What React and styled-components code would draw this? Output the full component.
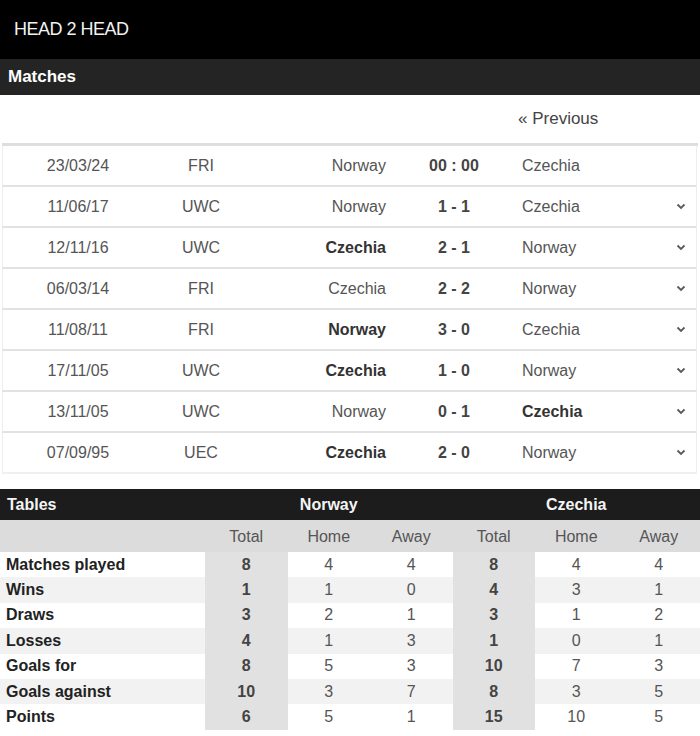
import React from "react";
import styled, { createGlobalStyle } from "styled-components";

const Global = createGlobalStyle`
  html, body { margin: 0; padding: 0; background: #fff; }
  body { font-family: "Liberation Sans", Arial, sans-serif; }
`;

const Page = styled.div`
  width: 700px;
  display: flex;
  flex-direction: column;
`;

const TopBar = styled.div`
  height: 59px;
  background: #000;
  color: #f2f2f2;
  display: flex;
  align-items: center;
  padding-left: 14px;
  font-size: 18px;
  letter-spacing: -0.5px;
`;

const SectionBar = styled.div`
  height: 36px;
  background: #242424;
  color: #fff;
  display: flex;
  align-items: center;
  padding-left: 8px;
  font-size: 17px;
  font-weight: bold;
`;

const PrevRow = styled.div`
  height: 48px;
  display: grid;
  grid-template-columns: 521px 1fr;
  align-items: center;
  border-bottom: 3px solid #dedede;
  margin: 0 2px;
`;

const PrevLink = styled.div`
  grid-column: 2;
  font-size: 17px;
  color: #444;
  transform: translateX(-5px);
`;

const MatchList = styled.div`
  display: flex;
  flex-direction: column;
  margin: 0 3px 0 2px;
`;

const MatchRow = styled.div`
  height: 39px;
  display: grid;
  grid-template-columns: 150px 96px 137px 136px 1fr 40px;
  align-items: center;
  border-left: 1px solid #eee;
  border-right: 1px solid #eee;
  border-bottom: 2px solid #e2e2e2;
  font-size: 16px;
  color: #555;
  &:last-child { border-bottom-color: #f0f0f0; }
`;

const Cell = styled.div`
  text-align: ${(p) => p.$align || "center"};
  font-weight: ${(p) => (p.$bold ? "bold" : "normal")};
  color: ${(p) => (p.$bold ? "#333" : "#555")};
`;

const Score = styled.div`
  text-align: center;
  font-weight: bold;
  color: #444;
  font-size: 16px;
`;

const Chevron = styled.div`
  display: flex;
  justify-content: center;
  align-items: center;
  padding-left: 10px;
`;

const Tables = styled.div`
  margin-top: 15px;
  display: grid;
  grid-template-columns: 205px repeat(6, 1fr);
`;

const THead = styled.div`
  height: 31px;
  background: #1c1c1c;
  color: #f4f4f4;
  display: flex;
  align-items: center;
  font-size: 16px;
  font-weight: bold;
  grid-column: ${(p) => p.$span || "auto"};
  justify-content: ${(p) => (p.$left ? "flex-start" : "center")};
  padding-left: ${(p) => (p.$left ? "7px" : "0")};
`;

const SubHead = styled.div`
  height: 32px;
  background: #dcdcdc;
  color: #555;
  display: flex;
  align-items: flex-end;
  justify-content: center;
  padding-bottom: 6px;
  box-sizing: border-box;
  font-size: 16px;
`;

const DataCell = styled.div`
  height: 25.4px;
  display: flex;
  align-items: center;
  justify-content: ${(p) => (p.$label ? "flex-start" : "center")};
  padding-left: ${(p) => (p.$label ? "6px" : "0")};
  background: ${(p) => (p.$total ? "#e1e1e1" : p.$alt ? "#f2f2f2" : "#fff")};
  font-size: 16px;
  font-weight: ${(p) => (p.$label || p.$total ? "bold" : "normal")};
  color: ${(p) => (p.$label ? "#222" : p.$total ? "#444" : "#555")};
`;

const matches = [
  ["23/03/24", "FRI", "Norway", "00 : 00", "Czechia", 0, false],
  ["11/06/17", "UWC", "Norway", "1 - 1", "Czechia", 0, true],
  ["12/11/16", "UWC", "Czechia", "2 - 1", "Norway", 1, true],
  ["06/03/14", "FRI", "Czechia", "2 - 2", "Norway", 0, true],
  ["11/08/11", "FRI", "Norway", "3 - 0", "Czechia", 1, true],
  ["17/11/05", "UWC", "Czechia", "1 - 0", "Norway", 1, true],
  ["13/11/05", "UWC", "Norway", "0 - 1", "Czechia", 2, true],
  ["07/09/95", "UEC", "Czechia", "2 - 0", "Norway", 1, true],
];

const stats = [
  ["Matches played", 8, 4, 4, 8, 4, 4],
  ["Wins", 1, 1, 0, 4, 3, 1],
  ["Draws", 3, 2, 1, 3, 1, 2],
  ["Losses", 4, 1, 3, 1, 0, 1],
  ["Goals for", 8, 5, 3, 10, 7, 3],
  ["Goals against", 10, 3, 7, 8, 3, 5],
  ["Points", 6, 5, 1, 15, 10, 5],
];

const ChevronIcon = () => (
  <svg width="10" height="7" viewBox="0 0 10 7">
    <polyline points="1.5,1.5 5,5 8.5,1.5" fill="none" stroke="#5a5a5a" strokeWidth="1.8" />
  </svg>
);

export default function App() {
  return (
    <Page>
      <Global />
      <TopBar>HEAD 2 HEAD</TopBar>
      <SectionBar>Matches</SectionBar>
      <PrevRow>
        <PrevLink>« Previous</PrevLink>
      </PrevRow>
      <MatchList>
        {matches.map(([d, c, h, s, a, w, chev]) => (
          <MatchRow key={d}>
            <Cell>{d}</Cell>
            <Cell>{c}</Cell>
            <Cell $align="right" $bold={w === 1}>{h}</Cell>
            <Score>{s}</Score>
            <Cell $align="left" $bold={w === 2}>{a}</Cell>
            <Chevron>{chev && <ChevronIcon />}</Chevron>
          </MatchRow>
        ))}
      </MatchList>
      <Tables>
        <THead $left>Tables</THead>
        <THead $span="span 3">Norway</THead>
        <THead $span="span 3">Czechia</THead>
        <SubHead />
        {["Total", "Home", "Away", "Total", "Home", "Away"].map((t, i) => (
          <SubHead key={i}>{t}</SubHead>
        ))}
        {stats.map((row, r) =>
          row.map((v, i) => (
            <DataCell
              key={r + "-" + i}
              $label={i === 0}
              $total={i === 1 || i === 4}
              $alt={r % 2 === 1}
            >
              {v}
            </DataCell>
          ))
        )}
      </Tables>
    </Page>
  );
}
